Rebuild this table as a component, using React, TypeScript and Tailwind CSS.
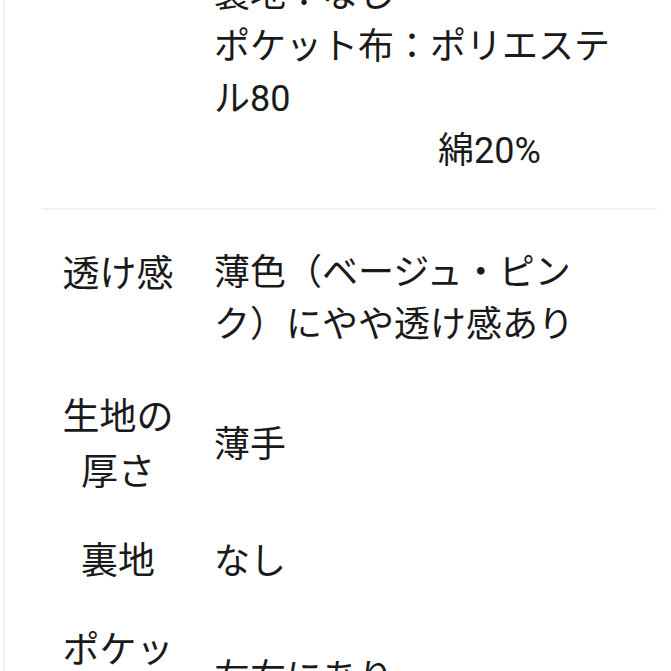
import React from 'react';

const font = { fontFamily: 'Roboto, "Noto Sans CJK JP", "Noto Sans", sans-serif' };

type Row = { label: string; value: string };

const rows: Row[] = [
  { label: '透け感', value: '薄色（ベージュ・ピンク）にやや透け感あり' },
  { label: '生地の厚さ', value: '薄手' },
  { label: '裏地', value: 'なし' },
  { label: 'ポケット', value: '左右にあり' },
];

function SpecRow({ row }: { row: Row }) {
  return (
    <div className="flex">
      <div className="w-[152px] shrink-0 px-[16px] text-center text-[37px] leading-[55px]">
        {row.label}
      </div>
      <div className="ml-[20px] w-[410px] self-center text-[36px] leading-[52px] [text-spacing-trim:space-all]">
        {row.value}
      </div>
    </div>
  );
}

export default function App() {
  return (
    <div className="h-[671px] w-full overflow-hidden bg-white pl-[3px]" style={font}>
      <div className="flex h-full flex-col border-l-2 border-[#f0f0f0] pl-[37px] pr-[14px] text-[#1a1a1a]">
        {/* 素材の続き */}
        <div className="-mt-[31px] flex pb-[31px]">
          <div className="w-[152px] shrink-0" />
          <div className="ml-[20px] w-[410px] text-[36px] leading-[52px] [text-spacing-trim:space-all]">
            <div>裏地：なし</div>
            <div>ポケット布：ポリエステル80</div>
            <div className="pl-[224px]">綿20%</div>
          </div>
        </div>

        <div className="h-[2px] shrink-0 bg-[#f2f2f2]" />

        <div className="flex flex-col gap-[34px] pt-[37px]">
          {rows.map((row, i) => (
            <div key={row.label} className={i === 0 ? 'pb-[5px]' : ''}>
              <SpecRow row={row} />
            </div>
          ))}
        </div>
      </div>
    </div>
  );
}
